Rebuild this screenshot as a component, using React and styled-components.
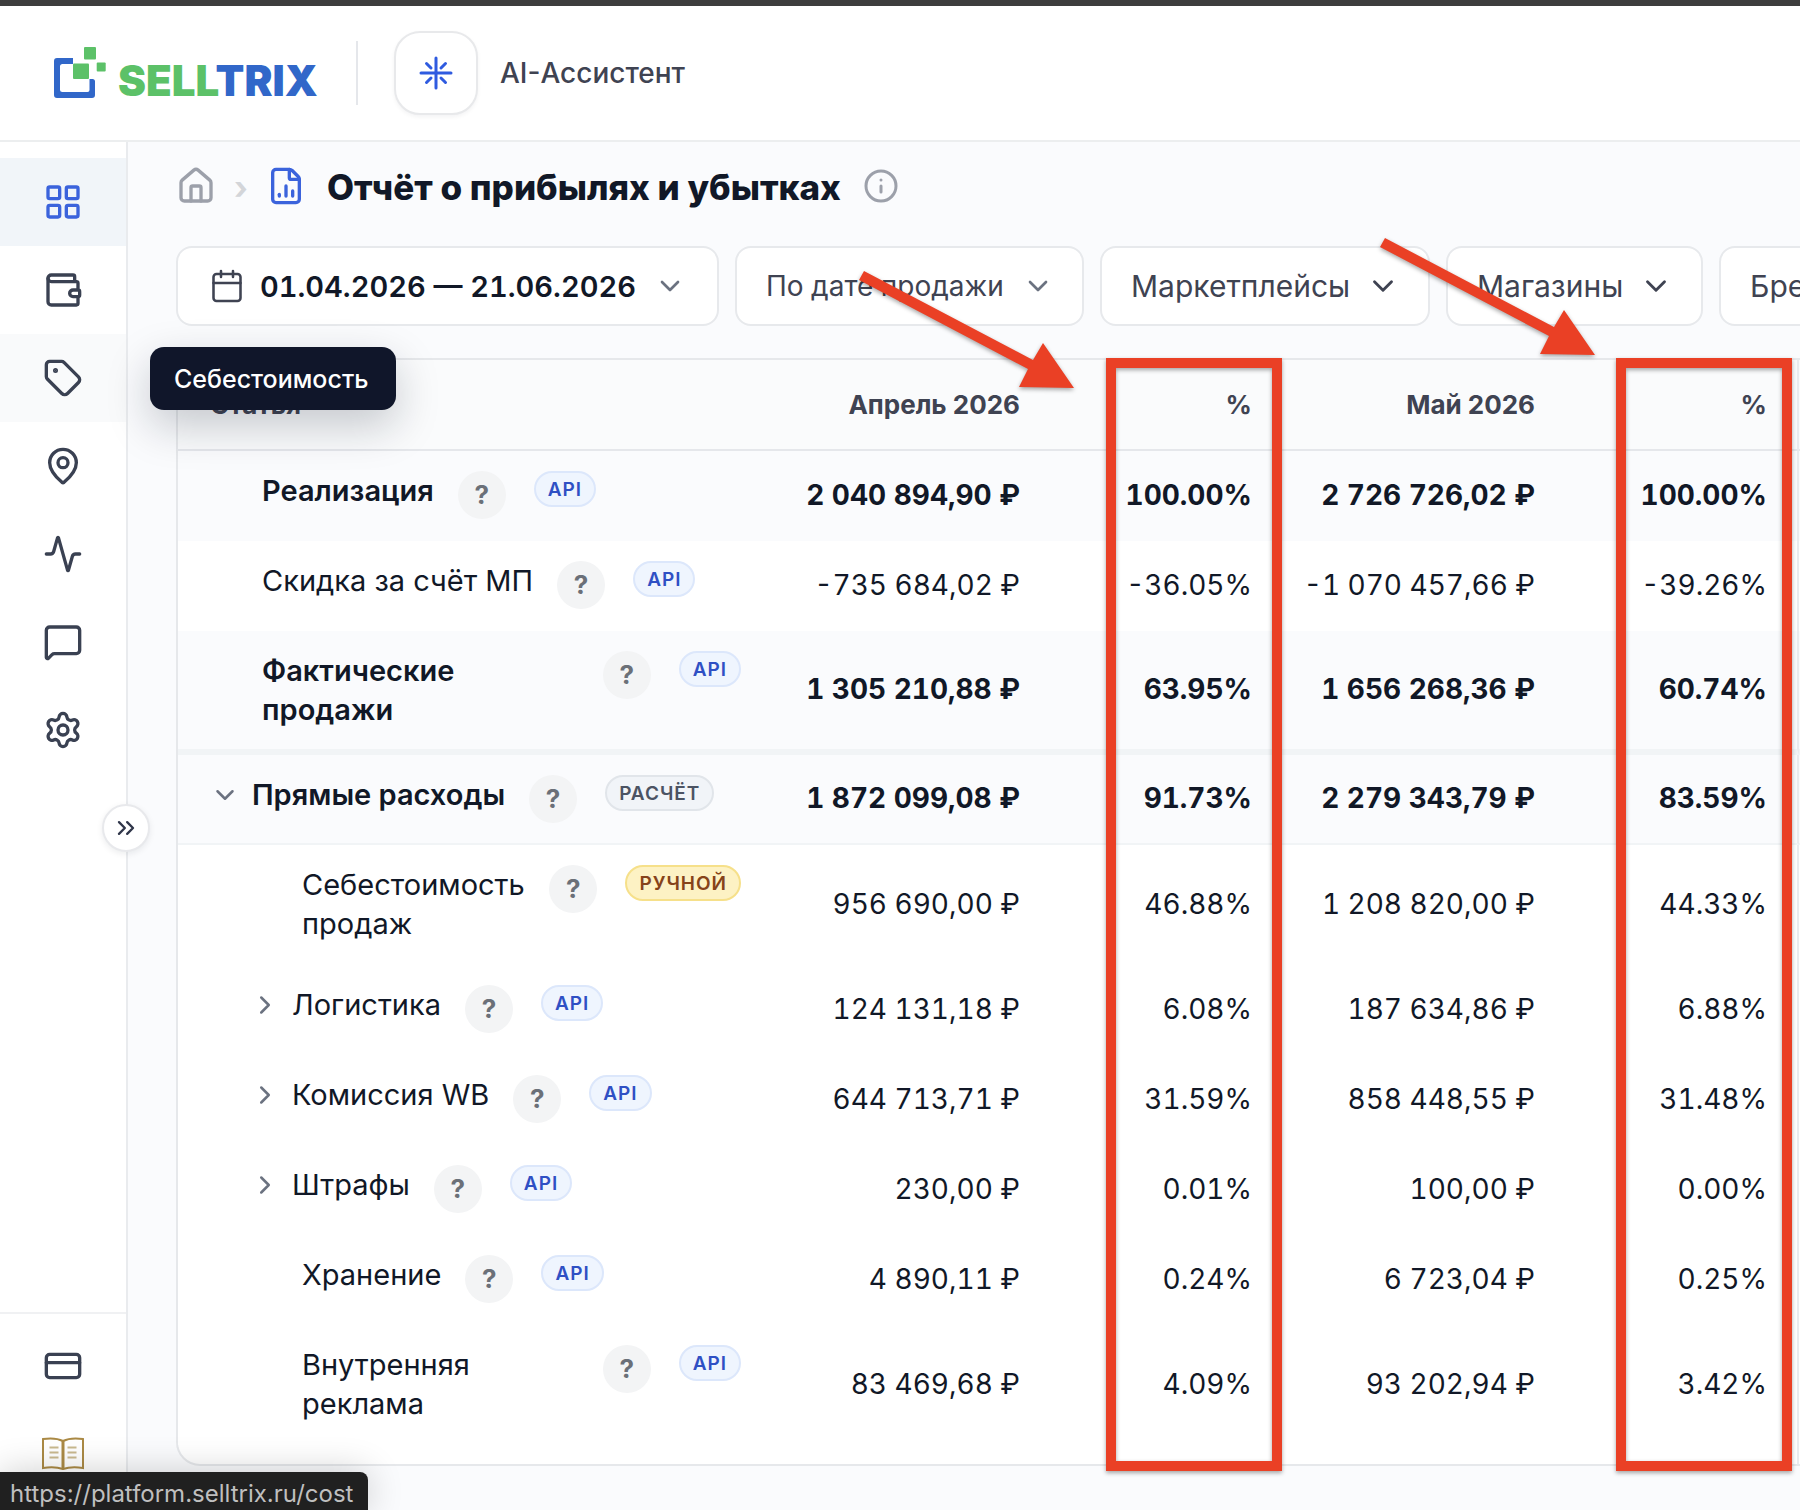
import React from "react";
import styled, { createGlobalStyle, css } from "styled-components";
import {
  LayoutGrid, Wallet, Tag, MapPin, Activity, MessageSquare, Settings, CreditCard,
  ChevronsRight, ChevronDown, ChevronRight, Calendar, House, FileChartColumn, Info,
} from "lucide-react";

const Global = createGlobalStyle`
  *, *::before, *::after { box-sizing: border-box; }
  html, body { height: 100%; overflow: hidden; }
  body { margin: 0; background: #fafbfd; color: #111827; font-family: Inter, "Noto Sans", sans-serif; }
  #root { height: 100%; }
  button { font: inherit; color: inherit; cursor: pointer; }
  a { color: inherit; text-decoration: none; }
`;

const Page = styled.div`
  position: relative;
  display: flex;
  flex-direction: column;
  height: 100vh;
  overflow: hidden;
  border-top: 6px solid #3d3d3d;
`;

const Header = styled.header`
  display: flex;
  align-items: center;
  flex: none;
  height: 136px;
  padding: 0 54px;
  background: #fff;
  border-bottom: 2px solid #eceeef;
`;

const Logo = styled.a`
  display: flex;
  align-items: flex-end;
  gap: 12px;
`;

const Wordmark = styled.span`
  min-width: 200px;
  padding-bottom: 3px;
  font-size: 42px;
  line-height: 30px;
  font-weight: 900;
  color: #3167c9;
  b { font-weight: 900; color: #5cc168; }
`;

const HeaderDivider = styled.span`
  width: 2px;
  height: 64px;
  margin: 0 36px 0 38px;
  background: #e5e7eb;
`;

const Assistant = styled.button`
  display: flex;
  align-items: center;
  gap: 22px;
  padding: 0;
  border: 0;
  background: none;
  font-size: 28px;
  font-weight: 500;
  color: #3f4352;
`;

const AssistantIcon = styled.span`
  display: grid;
  place-items: center;
  width: 84px;
  height: 84px;
  border: 2px solid #e8e9eb;
  border-radius: 26px;
  background: #fff;
  box-shadow: 0 2px 4px rgba(15, 23, 42, 0.05);
`;

const Body = styled.div`
  display: flex;
  flex: 1;
  min-height: 0;
`;

const Sidebar = styled.aside`
  position: relative;
  display: flex;
  flex-direction: column;
  justify-content: space-between;
  flex: none;
  width: 128px;
  padding-top: 16px;
  background: #fff;
  border-right: 2px solid #e9ebee;
`;

const Nav = styled.nav`
  display: flex;
  flex-direction: column;
`;

const FooterNav = styled(Nav)`
  padding: 8px 0 12px;
  border-top: 2px solid #f0f1f3;
`;

const NavItem = styled.a`
  display: grid;
  place-items: center;
  height: 88px;
  color: ${(p) => (p.$active ? "#3b63dc" : "#3a4152")};
  background: ${(p) => (p.$active ? "#f1f5f9" : p.$hover ? "#f9fafb" : "transparent")};
`;

const Collapse = styled.button`
  position: absolute;
  top: 662px;
  right: -24px;
  z-index: 2;
  display: grid;
  place-items: center;
  width: 48px;
  height: 48px;
  padding: 0;
  border: 2px solid #e8e9ec;
  border-radius: 50%;
  background: #fff;
  box-shadow: 0 2px 6px rgba(15, 23, 42, 0.08);
`;

const Tooltip = styled.div`
  position: absolute;
  left: 150px;
  top: 205px;
  z-index: 3;
  padding: 17px 28px 15px 24px;
  border-radius: 14px;
  background: #10162a;
  color: #fff;
  font-size: 25px;
  line-height: 31px;
  font-weight: 500;
  white-space: nowrap;
  box-shadow: 0 16px 44px rgba(15, 23, 42, 0.22);
`;

const Main = styled.main`
  flex: 1;
  min-width: 0;
  padding: 16px 0 44px 48px;
  overflow: hidden;
`;

const Crumbs = styled.div`
  display: flex;
  align-items: center;
  height: 56px;
  color: #9ca0aa;
`;

const CrumbLink = styled.a`
  display: flex;
`;

const Separator = styled.span`
  width: 50px;
  padding-top: 3px;
  text-align: center;
  font-size: 32px;
  font-weight: 700;
  color: #d3d5d9;
`;

const Title = styled.h1`
  margin: 0 22px 0 21px;
  padding-top: 2px;
  font-size: 35px;
  line-height: 48px;
  font-weight: 800;
  white-space: nowrap;
  color: #111827;
`;

const InfoButton = styled.button`
  display: flex;
  padding: 0;
  border: 0;
  background: none;
  color: #9ca0aa;
`;

const Filters = styled.div`
  display: flex;
  gap: 16px;
  margin: 32px 0;
`;

const Filter = styled.button`
  display: flex;
  align-items: center;
  justify-content: space-between;
  flex: none;
  width: ${(p) => p.$width}px;
  height: 80px;
  padding: ${(p) => (p.$strong ? "0 31px" : "0 28px 0 29px")};
  border: 2px solid #e7e9ec;
  border-radius: 16px;
  background: #fff;
  color: ${(p) => (p.$strong ? "#111827" : "#3f4352")};
  font-size: ${(p) => p.$size || 30}px;
  font-weight: ${(p) => (p.$strong ? 600 : 400)};
  font-variant-numeric: tabular-nums;
  white-space: nowrap;
`;

const FilterLabel = styled.span`
  display: flex;
  align-items: center;
  gap: 15px;
`;

const Card = styled.div`
  width: max-content;
  border: 2px solid #e6e8eb;
  border-radius: 24px;
  background: #fff;
  overflow: hidden;
`;

const Table = styled.table`
  width: 1896px;
  table-layout: fixed;
  border-collapse: separate;
  border-spacing: 0;
`;

const Th = styled.th`
  height: 91px;
  padding: 0 ${(p) => (p.$pct ? 30 : 32)}px;
  border-bottom: 2px solid #e5e7eb;
  ${(p) => p.$edge && css`border-right: 2px solid #e9ebee;`}
  background: #fafbfc;
  color: #3f4352;
  font-size: 26px;
  font-weight: 700;
  text-align: ${(p) => (p.$left ? "left" : "right")};
`;

const Row = styled.tr`
  background: ${(p) => (p.$tint ? "#fafbfd" : "#fff")};
  td {
    height: ${(p) => (p.$tall ? (p.$rule === 6 ? 124 : 120) : 90)}px;
    font-weight: ${(p) => (p.$bold ? 600 : 400)};
    ${(p) => p.$rule && css`border-bottom: ${p.$rule}px solid #f1f4f6;`}
  }
`;

const NameCell = styled.td`
  padding: 20px 26px 0 ${(p) => 32 + p.$level * 40}px;
  vertical-align: top;
`;

const NameLine = styled.div`
  display: flex;
  align-items: flex-start;
`;

const Toggle = styled.button`
  display: grid;
  place-items: center;
  flex: none;
  width: 30px;
  height: 39px;
  margin-right: 12px;
  padding: 0;
  border: 0;
  background: none;
  color: #6b7280;
`;

const Spacer = styled.span`
  flex: none;
  width: 52px;
`;

const Name = styled.span`
  font-size: 29px;
  line-height: 39px;
`;

const Help = styled.button`
  flex: none;
  width: 48px;
  height: 48px;
  margin: 0 28px 0 24px;
  padding: 0;
  border: 0;
  border-radius: 50%;
  background: #f3f4f5;
  color: #6b7078;
  font-size: 26px;
  line-height: 48px;
  font-weight: 700;
`;

const tones = {
  API: ["#eff5fe", "#dce7fb", "#2f50c4"],
  РАСЧЁТ: ["#f1f4f8", "#e1e5ea", "#4b5363"],
  РУЧНОЙ: ["#fdf2c4", "#f6e08a", "#86431a"],
};

const Badge = styled.span`
  flex: none;
  height: 36px;
  padding: 0 12px;
  border: 2px solid ${(p) => tones[p.$tone][1]};
  border-radius: 18px;
  background: ${(p) => tones[p.$tone][0]};
  color: ${(p) => tones[p.$tone][2]};
  font-size: 19px;
  line-height: 34px;
  font-weight: 600;
  letter-spacing: 1px;
`;

const Num = styled.td`
  padding: 0 ${(p) => (p.$pct ? 30 : 32)}px 3px 0;
  font-size: 28px;
  font-variant-numeric: tabular-nums;
  text-align: right;
  white-space: nowrap;
  ${(p) => p.$strong && css`&& { font-weight: 700; }`}
  ${(p) => p.$edge && css`border-right: 2px solid #e9ebee;`}
`;

const EndCell = styled.td`
  height: 19px;
  padding: 0;
  ${(p) => p.$edge && css`border-right: 2px solid #e9ebee;`}
`;

const Highlight = styled.div`
  position: absolute;
  left: ${(p) => p.$x}px;
  top: 352px;
  z-index: 4;
  width: 176px;
  height: 1113px;
  border: 10px solid #ea4025;
  filter: drop-shadow(0 2px 2px rgba(0, 0, 0, 0.35));
  pointer-events: none;
`;

const Arrow = styled.svg`
  position: absolute;
  left: ${(p) => p.$x}px;
  top: ${(p) => p.$y}px;
  z-index: 5;
  overflow: visible;
  filter: drop-shadow(0 2px 2px rgba(0, 0, 0, 0.35));
  pointer-events: none;
`;

const StatusBar = styled.div`
  position: absolute;
  left: 0;
  bottom: 0;
  z-index: 6;
  height: 38px;
  padding: 0 15px 0 10px;
  border-radius: 0 8px 0 0;
  background: #202020;
  color: #bfbfbf;
  font-size: 24px;
  line-height: 43px;
  box-shadow: 0 0 36px rgba(0, 0, 0, 0.2);
`;

const LogoMark = () => (
  <svg width="52" height="52" viewBox="0 0 52 52" aria-hidden="true">
    <path d="M19 11H3a3 3 0 0 0-3 3V48a3 3 0 0 0 3 3H38a3 3 0 0 0 3-3V34.500a2.500 2.500 0 0 0-2.500-2.500H35.500V43a2 2 0 0 1-2 2H8.500a2.500 2.500 0 0 1-2.500-2.500V19.500A2.500 2.500 0 0 1 8.500 17H19z" fill="#3167c9" />
    <rect x="30" y="0" width="12" height="12.500" rx="1" fill="#5cc168" />
    <rect x="19" y="16.500" width="16" height="15.500" rx="1" fill="#5cc168" />
    <rect x="42.700" y="15.500" width="9" height="9" rx="1" fill="#5cc168" />
  </svg>
);

const Spark = () => (
  <svg width="34" height="34" viewBox="0 0 34 34" fill="none" stroke="#2f5be0" strokeWidth="3" strokeLinecap="round" aria-hidden="true">
    <path d="M17 2v30M2 17h30M7.500 7.500l4.500 4.500M26.500 7.500l-4.500 4.500M7.500 26.500l4.500-4.500M26.500 26.500l-4.500-4.500" />
  </svg>
);

const Book = () => (
  <svg width="42" height="34" viewBox="0 0 42 34" fill="none" stroke="#ab8a45" strokeWidth="2" aria-hidden="true">
    <path d="M21 4C15 1 8 1 1 2v29c7-1 14-1 20 1 6-2 13-2 20-1V2C34 1 27 1 21 4z" />
    <path d="M21 4v28" strokeWidth="3" />
    <path d="M7.500 10.500h9M7.500 15.500h9M7.500 20.500h9M25.500 10.500h9M25.500 15.500h9M25.500 20.500h9" stroke="#c9b98f" />
  </svg>
);

const navItems = [
  ["Дашборд", LayoutGrid], ["Финансы", Wallet], ["Себестоимость", Tag], ["География", MapPin],
  ["Аналитика", Activity], ["Отзывы", MessageSquare], ["Настройки", Settings],
];

const rows = [
  { name: "Реализация", tag: "API", v: ["2 040 894,90 ₽", "100.00%", "2 726 726,02 ₽", "100.00%"], bold: true, tint: true },
  { name: "Скидка за счёт МП", tag: "API", v: ["-735 684,02 ₽", "-36.05%", "-1 070 457,66 ₽", "-39.26%"] },
  { name: "Фактические продажи", tag: "API", v: ["1 305 210,88 ₽", "63.95%", "1 656 268,36 ₽", "60.74%"], bold: true, tint: true, tall: true, rule: 6 },
  { name: "Прямые расходы", tag: "РАСЧЁТ", v: ["1 872 099,08 ₽", "91.73%", "2 279 343,79 ₽", "83.59%"], bold: true, tint: true, rule: 2, icon: ChevronDown },
  { name: "Себестоимость продаж", tag: "РУЧНОЙ", v: ["956 690,00 ₽", "46.88%", "1 208 820,00 ₽", "44.33%"], level: 1, tall: true },
  { name: "Логистика", tag: "API", v: ["124 131,18 ₽", "6.08%", "187 634,86 ₽", "6.88%"], level: 1, icon: ChevronRight },
  { name: "Комиссия WB", tag: "API", v: ["644 713,71 ₽", "31.59%", "858 448,55 ₽", "31.48%"], level: 1, icon: ChevronRight },
  { name: "Штрафы", tag: "API", v: ["230,00 ₽", "0.01%", "100,00 ₽", "0.00%"], level: 1, icon: ChevronRight },
  { name: "Хранение", tag: "API", v: ["4 890,11 ₽", "0.24%", "6 723,04 ₽", "0.25%"], level: 1 },
  { name: "Внутренняя реклама", tag: "API", v: ["83 469,68 ₽", "4.09%", "93 202,94 ₽", "3.42%"], level: 1, tall: true },
];

export default function App() {
  return (
    <Page>
      <Global />
      <Header>
        <Logo href="#" aria-label="Selltrix">
          <LogoMark />
          <Wordmark><b>SELL</b>TRIX</Wordmark>
        </Logo>
        <HeaderDivider />
        <Assistant type="button">
          <AssistantIcon><Spark /></AssistantIcon>
          AI-Ассистент
        </Assistant>
      </Header>
      <Body>
        <Sidebar>
          <Nav>
            {navItems.map(([label, Icon], i) => (
              <NavItem key={label} href="#" aria-label={label} $active={i === 0} $hover={i === 2}>
                <Icon size={40} strokeWidth={2} />
              </NavItem>
            ))}
          </Nav>
          <FooterNav>
            <NavItem href="#" aria-label="Оплата"><CreditCard size={40} strokeWidth={2} /></NavItem>
            <NavItem href="#" aria-label="База знаний"><Book /></NavItem>
          </FooterNav>
          <Collapse type="button" aria-label="Развернуть меню"><ChevronsRight size={28} color="#30364a" /></Collapse>
          <Tooltip role="tooltip">Себестоимость</Tooltip>
        </Sidebar>
        <Main>
          <Crumbs>
            <CrumbLink href="#" aria-label="Главная"><House size={40} strokeWidth={2} /></CrumbLink>
            <Separator>›</Separator>
            <FileChartColumn size={40} strokeWidth={2} color="#3b63dc" />
            <Title>Отчёт о прибылях и убытках</Title>
            <InfoButton type="button" aria-label="Справка"><Info size={36} strokeWidth={2} /></InfoButton>
          </Crumbs>
          <Filters>
            <Filter type="button" $width={543} $strong $size={29}>
              <FilterLabel><Calendar size={36} strokeWidth={1.7} color="#3f4352" />01.04.2026 — 21.06.2026</FilterLabel>
              <ChevronDown size={32} strokeWidth={2} color="#6b7280" />
            </Filter>
            <Filter type="button" $width={349} $size={28}>По дате продажи<ChevronDown size={32} strokeWidth={2} color="#6b7280" /></Filter>
            <Filter type="button" $width={330}>Маркетплейсы<ChevronDown size={34} strokeWidth={2} /></Filter>
            <Filter type="button" $width={257}>Магазины<ChevronDown size={34} strokeWidth={2} /></Filter>
            <Filter type="button" $width={250}>Бренды<ChevronDown size={34} strokeWidth={2} /></Filter>
          </Filters>
          <Card>
            <Table>
              <colgroup>
                <col style={{ width: 589 }} /><col style={{ width: 285 }} /><col style={{ width: 230 }} />
                <col style={{ width: 285 }} /><col style={{ width: 232 }} /><col />
              </colgroup>
              <thead>
                <tr>
                  <Th $left>Статья</Th><Th>Апрель 2026</Th><Th $pct>%</Th><Th>Май 2026</Th><Th $pct $edge>%</Th><Th />
                </tr>
              </thead>
              <tbody>
                {rows.map((r) => (
                  <Row key={r.name} $tall={r.tall} $tint={r.tint} $bold={r.bold} $rule={r.rule}>
                    <NameCell $level={r.level || 0}>
                      <NameLine>
                        {r.icon ? <Toggle type="button" aria-label={r.name}><r.icon size={30} strokeWidth={2} /></Toggle> : <Spacer />}
                        <Name>{r.name}</Name>
                        <Help type="button" aria-label={"Подробнее: " + r.name}>?</Help>
                        <Badge $tone={r.tag}>{r.tag}</Badge>
                      </NameLine>
                    </NameCell>
                    {r.v.map((v, i) => <Num key={i} $strong={r.bold} $pct={i % 2 === 1} $edge={i === 3}>{v}</Num>)}
                    <td />
                  </Row>
                ))}
              </tbody>
              <tfoot>
                <tr><EndCell colSpan={5} $edge /><EndCell /></tr>
              </tfoot>
            </Table>
          </Card>
        </Main>
      </Body>
      <Highlight $x={1106} />
      <Highlight $x={1616} />
      <Arrow $x={859} $y={265} width="216" height="118" viewBox="0 0 216 118" aria-hidden="true">
        <path d="M5 0L174 89L184 72L215 117L160 116L169 98L0 9z" fill="#ea4025" />
      </Arrow>
      <Arrow $x={1380} $y={232} width="216" height="118" viewBox="0 0 216 118" aria-hidden="true">
        <path d="M5 0L174 89L184 72L215 117L160 116L169 98L0 9z" fill="#ea4025" />
      </Arrow>
      <StatusBar>https://platform.selltrix.ru/cost</StatusBar>
    </Page>
  );
}
